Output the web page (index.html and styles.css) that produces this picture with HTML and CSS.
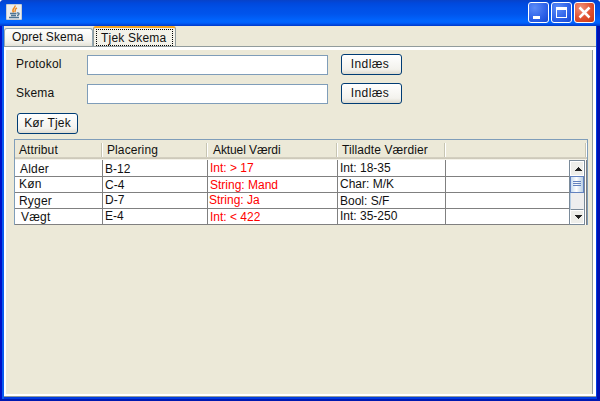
FILE: index.html
```
<!DOCTYPE html>
<html lang="da">
<head>
<meta charset="utf-8">
<title>Tjek Skema</title>
<link rel="stylesheet" href="styles.css">
</head>
<body>
<div class="window">
  <header class="titlebar">
    <svg class="java" width="16" height="16" viewBox="0 0 16 16">
      <rect width="16" height="16" rx="1" fill="#c7ccd3"/>
      <rect x="1" y="1" width="14" height="14" fill="#eceeef"/>
      <path d="M9 1.500C10 4 5 4.500 7.500 8.500M11 4C8 5 10 6.500 8.700 8" fill="none" stroke="#ed8b23" stroke-width="1.500"/>
      <path d="M4 9.500H10.500M5 11.500H10M11 9C14 8.500 13.500 11 11 11.500M3 13.500H13" fill="none" stroke="#4f7594" stroke-width="1.300"/>
    </svg>
    <div class="controls">
      <span class="control"><svg width="19" height="19"><path d="M4 13h7v3H4z" fill="#fff"/></svg></span>
      <span class="control"><svg width="19" height="19"><path d="M4 4h11v11H4z M5 7v7h9V7z" fill="#fff" fill-rule="evenodd"/></svg></span>
      <span class="control close"><svg width="19" height="19"><path d="M4.500 4.500L14.500 14.500M14.500 4.500L4.500 14.500" stroke="#fff" stroke-width="2.500"/></svg></span>
    </div>
  </header>
  <main class="content">
    <nav class="tabs">
      <div class="tab"><span>Opret Skema</span></div>
      <div class="tab active"><span>Tjek Skema</span></div>
    </nav>
    <section class="panel">
      <div class="field"><label>Protokol</label><input class="input" type="text"><button class="button">Indlæs</button></div>
      <div class="field"><label>Skema</label><input class="input" type="text"><button class="button">Indlæs</button></div>
      <button class="button run">Kør Tjek</button>
      <div class="table">
        <div class="head">
          <span>Attribut</span><span>Placering</span><span class="actual">Aktuel Værdi</span><span>Tilladte Værdier</span><span></span>
        </div>
        <div class="body">
          <div class="rows">
            <div class="row"><span class="n1">Alder</span><span class="low">B-12</span><span class="bad">Int: &gt; 17</span><span>Int: 18-35</span><span></span></div>
            <div class="row"><span>Køn</span><span class="low">C-4</span><span class="bad low">String: Mand</span><span>Char: M/K</span><span></span></div>
            <div class="row"><span class="low">Ryger</span><span>D-7</span><span class="bad left">String: Ja</span><span class="low">Bool: S/F</span><span></span></div>
            <div class="row"><span class="n2">Vægt</span><span>E-4</span><span class="bad low">Int: &lt; 422</span><span>Int: 35-250</span><span></span></div>
          </div>
          <div class="scroll">
            <div class="arrow"><svg width="9" height="5" shape-rendering="crispEdges"><path d="M4 0h1v1h1v1h1v1h1v1H1V3h1V2h1V1h1z" fill="#222"/></svg></div>
            <div class="thumb"><i></i><i></i><i></i></div>
            <div class="track"></div>
            <div class="arrow down"><svg width="9" height="5" shape-rendering="crispEdges"><path d="M1 0h7v1H7v1H6v1H5v1H4V3H3V2H2V1H1z" fill="#222"/></svg></div>
          </div>
        </div>
      </div>
    </section>
  </main>
</div>
</body>
</html>
```

FILE: styles.css
```
* { box-sizing: border-box; }
body { margin: 0; font: 12px/14px "Liberation Sans", Arial, sans-serif; letter-spacing: .2px; color: #111; background: #fff; }
svg { display: block; }
.window {
  width: 600px; height: 401px; padding: 0 4px 4px; overflow: hidden;
  display: flex; flex-direction: column;
  border-radius: 4px 4px 0 0;
  background: linear-gradient(90deg, #0010c8 0, #0010c8 2px, #0a5cf0 2px, #0a5cf0 4px, #003ce0 4px, #003ce0 597px, #0010b0 597px);
  box-shadow: inset 0 -2px #0018b0;
}
.titlebar {
  height: 26px; margin: 0 -4px; padding: 2px 5px 0 6px; flex: none;
  display: flex; justify-content: space-between;
  background: linear-gradient(#0842c8 0, #0048dc 3px, #0050e6 8px, #0054ec 14px, #0066ff 21px, #0060fc 23px, #0038c8 26px);
}
.java { margin-top: 2px; }
.controls { display: flex; gap: 2px; }
.control {
  width: 21px; height: 21px; border: 1px solid #fff; border-radius: 3px;
  background: radial-gradient(circle at 30% 25%, #5c8cf8, #2c60e8 60%, #1648d0);
}
.close { background: radial-gradient(circle at 30% 25%, #f09078, #e05030 55%, #c83810); }
.content {
  flex: 1; display: flex; flex-direction: column; background: #ece9d8;
  border: solid #919b9c; border-width: 0 0 1px;
}
.tabs { height: 21px; display: flex; align-items: flex-end; border-bottom: 1px solid #919b9c; }
.tab {
  width: 89px; height: 18px; padding: 1px 0 0 7px; white-space: nowrap; letter-spacing: .08px;
  border: 1px solid #91a7b4; border-bottom: 0; border-radius: 3px 3px 0 0;
  background: linear-gradient(#fff, #f2f1eb 75%, #e4e2d8);
}
.tab.active {
  width: 83px; height: 20px; padding: 1px 2px 0; border-color: #919b9c; letter-spacing: .2px;
  border-top: 2px solid #f5a623; background: #f3f2e9;
}
.tab.active span { display: block; height: 17px; padding: 1px 0 0 4px; border: 1px dotted #000; }
.panel {
  flex: 1; padding: 4px 6px 0 8px; background: #ece9d8;
  border: solid #fff; border-width: 3px 3px 2px 2px;
  box-shadow: inset -1px 0 #919b9c;
}
.field { height: 21px; margin-bottom: 8px; display: flex; align-items: flex-start; }
.field label { width: 73px; padding: 3px 0 0 2px; }
.input { width: 241px; height: 20px; margin-top: 1px; padding: 0; border: 1px solid #7f9db9; background: #fff; }
.button {
  width: 61px; height: 21px; padding: 0 0 1px; display: block;
  font: inherit; letter-spacing: inherit; color: inherit;
  border: 1px solid #003c74; border-radius: 3px;
  background: linear-gradient(#fff, #f3f2ed 75%, #dedbd0);
}
.field .button { margin-left: 13px; padding-right: 3px; letter-spacing: .4px; }
.field + .button { margin: 9px 0 0 3px; }
.table { width: 574px; height: 86px; margin-top: 5px; border: 1px solid #7f9db9; border-bottom: 0; }
.head, .row { display: grid; grid-template-columns: 88px 105px 130px 108px 1fr; white-space: nowrap; }
.head {
  height: 20px; letter-spacing: .1px;
  background: linear-gradient(#ece9d8 17px, #d6d2c2 17px, #cbc7b8 19px, #f4f2e8 19px);
}
.head span { height: 14px; margin-top: 3px; padding-left: 4px; border-right: 1px solid #fff; box-shadow: inset -1px 0 #c7c5b2; }
.head .actual { padding-left: 5px; letter-spacing: -.1px; }
.body { height: 65px; display: flex; background: #fff; padding-right: 1px; border-right: 1px solid #808080; }
.rows { flex: 1; }
.row { height: 17px; border-bottom: 1px solid #808080; line-height: 14px; letter-spacing: 0; }
.row + .row { height: 16px; }
.row span { border-right: 1px solid #808080; padding: 1px 0 0 2px; }
.row span:last-child { border: 0; }
.row span:first-child { padding-left: 4px; letter-spacing: .2px; }
.row .low { padding-top: 2px; }
.row + .row span { padding-top: 0; }
.row + .row .low { padding-top: 1px; }
.row span.n1 { padding: 2px 0 0 5px; }
.row + .row span.n2 { padding: 1px 0 0 6px; }
.row .bad { color: #f00; }
.row .left { padding-left: 1px; }
.scroll { width: 16px; display: flex; flex-direction: column; border: 1px solid #7a8a99; background: #eee; }
.arrow { height: 15px; padding: 5px 0 0 3px; border: 1px solid #fff; background: #eeeeea; }
.thumb { height: 17px; padding: 4px 2px 0; border: 1px solid #6382bf; background: linear-gradient(90deg, #c8dcf0, #fff 45%, #b8cfe5); }
.thumb i { display: block; height: 1px; margin-bottom: 1px; background: #6382bf; }
.track { flex: 1; border-left: 1px solid #b8cfe5; }
.down { border-top: 1px solid #7a8a99; box-shadow: inset 0 1px #fff; }
```
